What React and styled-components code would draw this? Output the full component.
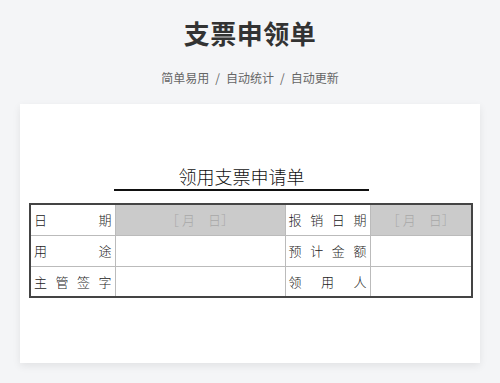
import React from "react";
import styled, { createGlobalStyle } from "styled-components";

const GlobalStyle = createGlobalStyle`
    body {
        margin: 0;
        background: #f4f5f7;
        font-family: "Noto Sans CJK SC", "Noto Sans", sans-serif;
    }
`;

const Page = styled.div`
    width: 500px;
    height: 383px;
    overflow: hidden;
    padding-top: 18px;
    box-sizing: border-box;
`;

const Title = styled.h1`
    margin: 0;
    text-align: center;
    font-size: 26px;
    line-height: 30px;
    font-weight: 700;
    color: #333;
    letter-spacing: 0.5px;
`;

const Tagline = styled.p`
    margin: 22px 0 0;
    text-align: center;
    font-size: 12px;
    line-height: 16px;
    color: #666;
    span { margin: 0 6px; }
`;

const Paper = styled.div`
    margin: 18px 20px 0;
    height: 259px;
    background: #fff;
    box-shadow: 0 3px 8px rgba(0, 0, 0, 0.08);
    padding-top: 61px;
    box-sizing: border-box;
`;

const DocTitle = styled.div`
    width: 255px;
    margin: 0 0 0 94px;
    text-align: center;
    font-size: 18px;
    line-height: 22px;
    font-weight: 300;
    color: #111;
    border-bottom: 2px solid #111;
    padding-bottom: 2px;
`;

const Sheet = styled.table`
    margin: 12px 0 0 9px;
    border-collapse: collapse;
    border: 2px solid #444;
    table-layout: fixed;
    width: 442px;
`;

const Cell = styled.td`
    width: ${(p) => p.$w}px;
    height: 31px;
    padding: 0 3px;
    border: 1px solid #bbb;
    box-sizing: border-box;
    font-size: 13px;
    font-weight: 300;
    color: ${(p) => (p.$shade ? "#a8a8a8" : "#222")};
    background: ${(p) => (p.$shade ? "#cbcbcb" : "#fff")};
    text-align: ${(p) => (p.$shade ? "center" : "justify")};
    text-align-last: ${(p) => (p.$shade ? "center" : "justify")};
    white-space: ${(p) => (p.$shade ? "pre" : "nowrap")};
`;

const rows = [
    ["日期", true, "报销日期", true],
    ["用途", false, "预计金额", false],
    ["主管签字", false, "领用人", false],
];

const spread = (s) => s.split("").join(" ");
const DATE_HINT = "［ 月　日］";

export default function App() {
    return (
        <Page>
            <GlobalStyle />
            <Title>支票申领单</Title>
            <Tagline>
                简单易用<span>/</span>自动统计<span>/</span>自动更新
            </Tagline>
            <Paper>
                <DocTitle>领用支票申请单</DocTitle>
                <Sheet>
                    <tbody>
                        {rows.map(([a, shadeA, b, shadeB]) => (
                            <tr key={a}>
                                <Cell $w={85}>{spread(a)}</Cell>
                                <Cell $w={170} $shade={shadeA}>{shadeA ? DATE_HINT : ""}</Cell>
                                <Cell $w={85}>{spread(b)}</Cell>
                                <Cell $w={102} $shade={shadeB}>{shadeB ? DATE_HINT : ""}</Cell>
                            </tr>
                        ))}
                    </tbody>
                </Sheet>
            </Paper>
        </Page>
    );
}
